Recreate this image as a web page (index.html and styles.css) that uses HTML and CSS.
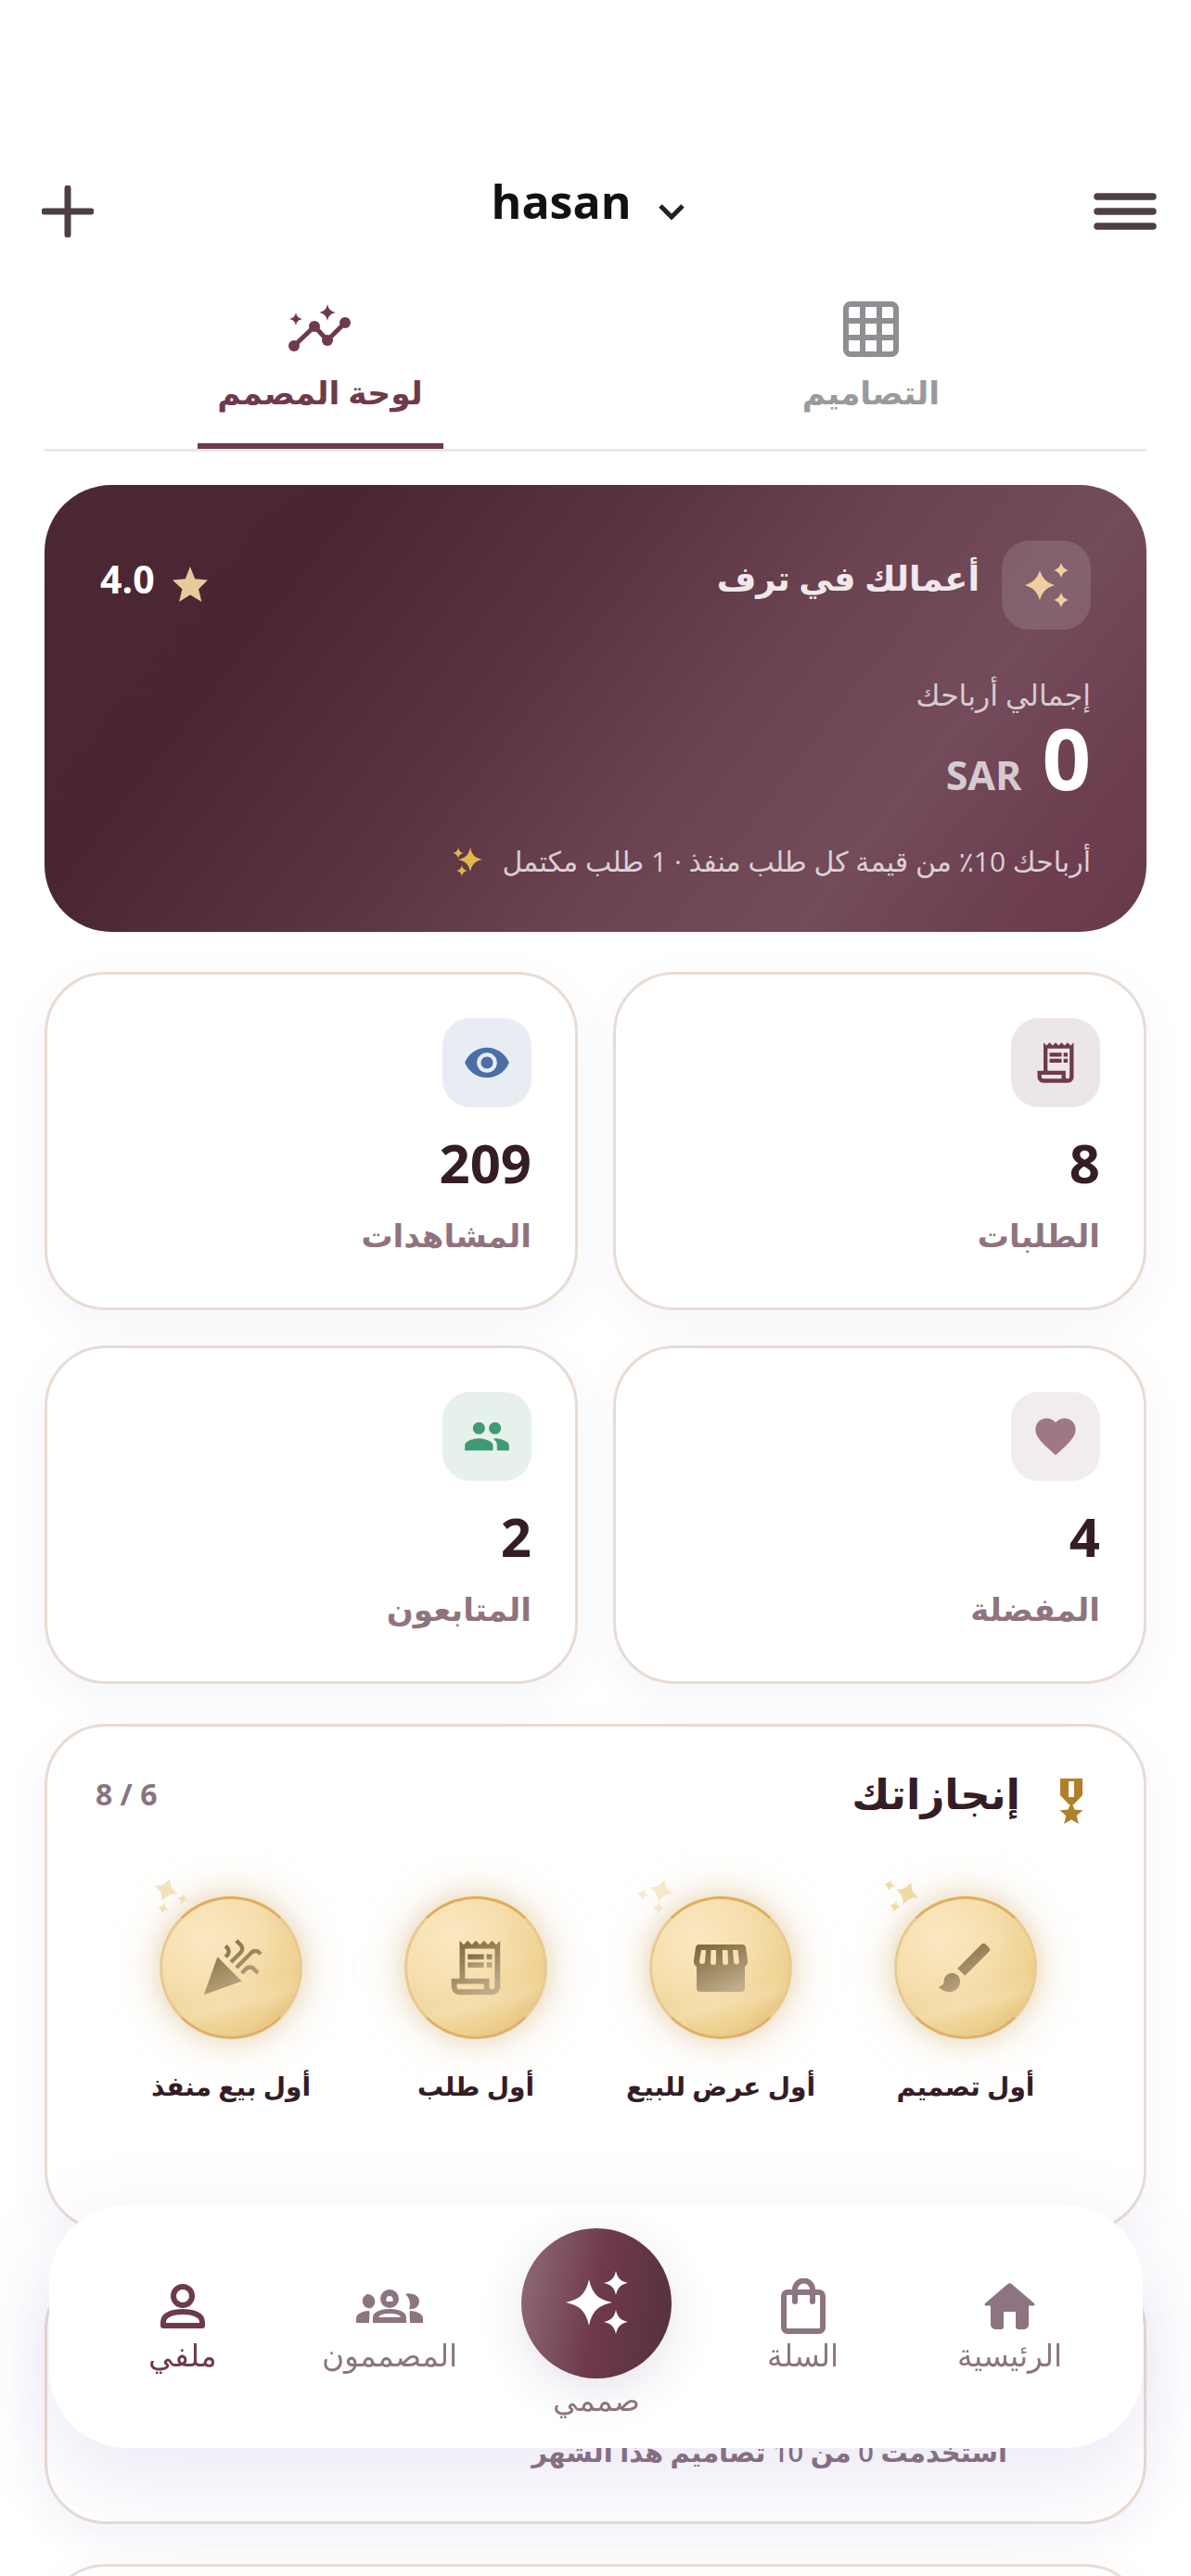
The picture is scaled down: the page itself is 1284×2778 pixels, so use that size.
FILE: index.html
```html
<!DOCTYPE html>
<html lang="ar" dir="rtl">
<head>
<meta charset="utf-8">
<title>hasan</title>
<link rel="stylesheet" href="styles.css">
</head>
<body>
<svg class="sprite" width="0" height="0" aria-hidden="true">
  <defs>
    <linearGradient id="gold" x1="0.2" y1="0" x2="0.7" y2="1">
      <stop offset="0" stop-color="#80693a"/>
      <stop offset="1" stop-color="#c2ae8e"/>
    </linearGradient>
    <path id="star4" d="M0-1C.14-.38.38-.14 1 0 .38.14.14.38 0 1-.14.38-.38.14-1 0-.38-.14-.14-.38 0-1Z"/>
    <path id="star4r" d="M0-1C.2-.42.42-.2 1 0 .42.2.2.42 0 1-.2.42-.42.2-1 0-.42-.2-.2-.42 0-1Z"/>
    <symbol id="i-receipt" viewBox="0 0 24 24">
      <path d="M19.5 3.5 18 2l-1.500 1.500L15 2l-1.500 1.500L12 2l-1.500 1.500L9 2 7.500 3.500 6 2v14H3v3c0 1.660 1.340 3 3 3h12c1.660 0 3-1.340 3-3V2l-1.500 1.500zM15 20H6c-.55 0-1-.45-1-1v-1h10v2zm4-1c0 .55-.45 1-1 1s-1-.45-1-1v-3H8V5h11v14z"/>
      <path d="M9 7h6v2H9zM16 7h2v2h-2zM9 10h6v2H9zM16 10h2v2h-2z"/>
    </symbol>
  </defs>
</svg>

<div class="app">
  <header class="topbar">
    <button class="icon-btn" aria-label="القائمة">
      <svg class="burger" viewBox="0 0 68 40"><path d="M4 4H64M4 20H64M4 36H64"/></svg>
    </button>
    <div class="account">
      <span class="account-name">hasan</span>
      <svg class="chevron" viewBox="0 0 30 18"><path d="M3 3 15 15 27 3"/></svg>
    </div>
    <button class="icon-btn" aria-label="إضافة">
      <svg class="plus" viewBox="0 0 56 56"><path d="M28 3V53M3 28H53"/></svg>
    </button>
  </header>

  <nav class="tabs">
    <div class="tab">
      <svg class="tab-icon grid-icon" viewBox="0 0 60 60"><rect x="3" y="3" width="54" height="54" rx="5"/><path d="M21 3V57M39 3V57M3 21H57M3 39H57"/></svg>
      <span class="tab-label">التصاميم</span>
    </div>
    <div class="tab tab-active">
      <svg class="tab-icon chart-icon" viewBox="0 0 72 60">
        <path class="chart-line" d="M8 48 30 27 44 42 63 23"/>
        <circle cx="8" cy="48" r="6"/><circle cx="30" cy="27" r="6"/><circle cx="44" cy="42" r="6"/><circle cx="63" cy="23" r="6"/>
        <use href="#star4" transform="translate(44 12) scale(9)"/>
        <use href="#star4" transform="translate(10 19) scale(7)"/>
      </svg>
      <span class="tab-label">لوحة المصمم</span>
    </div>
  </nav>

  <section class="hero">
    <div class="hero-top">
      <div class="hero-heading">
        <div class="hero-icon">
          <svg viewBox="0 0 96 96" class="hero-stars">
            <use href="#star4r" transform="translate(41 48) scale(16)"/>
            <use href="#star4r" transform="translate(64 32) scale(8)"/>
            <use href="#star4r" transform="translate(64 64) scale(8)"/>
          </svg>
        </div>
        <h2 class="hero-title">أعمالك في ترف</h2>
      </div>
      <div class="rating">
        <svg class="rating-star" viewBox="2 2 20 20"><path d="M12 17.270 18.180 21l-1.640-6.860L21.500 9.240l-6.910-.59L12 2 9.410 8.650 2.500 9.240l5.220 4.900L6.040 21z"/></svg>
        <span>4.0</span>
      </div>
    </div>
    <div class="hero-total-label">إجمالي أرباحك</div>
    <div class="hero-total"><span class="hero-amount">0</span><span class="hero-currency">SAR</span></div>
    <div class="hero-note">
      <span>أرباحك 10٪ من قيمة كل طلب منفذ · 1 طلب مكتمل</span>
      <svg class="note-sparkle" viewBox="0 0 32 32">
        <use href="#star4" transform="translate(19 14) scale(13)"/>
        <use href="#star4" transform="translate(6 7) scale(6)"/>
        <use href="#star4" transform="translate(10 26) scale(6)"/>
      </svg>
    </div>
  </section>

  <section class="stats">
    <article class="card stat">
      <div class="stat-icon tone-plum"><svg viewBox="0 0 24 24"><use href="#i-receipt"/></svg></div>
      <div class="stat-value">8</div>
      <div class="stat-label">الطلبات</div>
    </article>
    <article class="card stat">
      <div class="stat-icon tone-blue"><svg viewBox="0 0 24 24"><path d="M12 4.500C7 4.500 2.730 7.610 1 12c1.730 4.390 6 7.500 11 7.500s9.270-3.110 11-7.500c-1.730-4.390-6-7.500-11-7.500zM12 17c-2.760 0-5-2.240-5-5s2.240-5 5-5 5 2.240 5 5-2.240 5-5 5zm0-8c-1.660 0-3 1.340-3 3s1.340 3 3 3 3-1.340 3-3-1.340-3-3-3z"/></svg></div>
      <div class="stat-value">209</div>
      <div class="stat-label">المشاهدات</div>
    </article>
    <article class="card stat">
      <div class="stat-icon tone-rose"><svg viewBox="0 0 24 24"><path d="M12 21.350l-1.450-1.320C5.400 15.360 2 12.280 2 8.500 2 5.420 4.420 3 7.500 3c1.740 0 3.410.81 4.500 2.090C13.090 3.810 14.760 3 16.500 3 19.580 3 22 5.420 22 8.500c0 3.780-3.400 6.860-8.550 11.540L12 21.350z"/></svg></div>
      <div class="stat-value">4</div>
      <div class="stat-label">المفضلة</div>
    </article>
    <article class="card stat">
      <div class="stat-icon tone-green"><svg viewBox="0 0 24 24"><path d="M16 11c1.660 0 2.990-1.340 2.990-3S17.660 5 16 5c-1.660 0-3 1.340-3 3s1.340 3 3 3zm-8 0c1.660 0 2.990-1.340 2.990-3S9.660 5 8 5C6.340 5 5 6.340 5 8s1.340 3 3 3zm0 2c-2.330 0-7 1.170-7 3.500V19h14v-2.500c0-2.330-4.670-3.500-7-3.500zm8 0c-.29 0-.62.02-.97.05 1.160.84 1.970 1.970 1.970 3.450V19h6v-2.500c0-2.330-4.670-3.500-7-3.500z"/></svg></div>
      <div class="stat-value">2</div>
      <div class="stat-label">المتابعون</div>
    </article>
  </section>

  <section class="card achievements">
    <div class="ach-head">
      <div class="ach-title">
        <svg class="medal" viewBox="0 0 26 50">
          <path fill-rule="evenodd" d="M1 0H25V18L15.500 28H10.500L1 18ZM10 3V20H16V3Z"/>
          <path d="M13 25 16.500 33.500 25.500 34.200 18.700 40 20.800 49 13 44.200 5.200 49 7.300 40 .5 34.200 9.500 33.500Z"/>
        </svg>
        <h2>إنجازاتك</h2>
      </div>
      <div class="ach-count" dir="rtl">6 / 8</div>
    </div>
    <div class="badges">
      <div class="badge-item">
        <div class="badge">
          <svg class="sparkles" viewBox="0 0 60 60">
            <use href="#star4r" transform="translate(44 27) rotate(20) scale(13)"/>
            <use href="#star4r" transform="translate(25 18) rotate(15) scale(6)"/>
            <use href="#star4r" transform="translate(31 41) rotate(15) scale(6)"/>
          </svg>
          <svg class="badge-icon" viewBox="0 0 24 24"><path d="M7 14c-1.660 0-3 1.340-3 3 0 1.310-1.160 2-2 2 .92 1.220 2.490 2 4 2 2.210 0 4-1.790 4-4 0-1.660-1.340-3-3-3zm13.710-9.370l-1.340-1.340c-.39-.39-1.020-.39-1.410 0L9 12.250 11.750 15l8.960-8.960c.39-.39.39-1.020 0-1.410z"/></svg>
        </div>
        <div class="badge-label">أول تصميم</div>
      </div>
      <div class="badge-item">
        <div class="badge">
          <svg class="sparkles sparkles-soft" viewBox="0 0 60 60">
            <use href="#star4r" transform="translate(43 24) rotate(15) scale(13)"/>
            <use href="#star4r" transform="translate(23 28) rotate(10) scale(6)"/>
            <use href="#star4r" transform="translate(40 43) rotate(10) scale(6)"/>
          </svg>
          <svg class="badge-icon store" viewBox="0 0 58 51"><path fill-rule="evenodd" d="M6 0H52a4 4 0 0 1 4 3L58 17a7 7 0 0 1-3 7V47a4 4 0 0 1-4 4H7a4 4 0 0 1-4-4V24a7 7 0 0 1-3-7L2 3A4 4 0 0 1 6 0ZM8 6 6 18a3 3 0 0 0 6 0L13 6ZM18.500 6 18 19a3 3 0 0 0 6 0V6ZM31 6V19a3 3 0 0 0 6 0L36.500 6ZM42 6 43 18a3 3 0 0 0 6 1L47.500 6Z"/></svg>
        </div>
        <div class="badge-label">أول عرض للبيع</div>
      </div>
      <div class="badge-item">
        <div class="badge">
          <svg class="badge-icon" viewBox="0 0 24 24"><use href="#i-receipt"/></svg>
        </div>
        <div class="badge-label">أول طلب</div>
      </div>
      <div class="badge-item">
        <div class="badge">
          <svg class="sparkles sparkles-mid" viewBox="0 0 60 60">
            <use href="#star4r" transform="translate(37 23) rotate(20) scale(13)"/>
            <use href="#star4r" transform="translate(55 33) rotate(15) scale(6)"/>
            <use href="#star4r" transform="translate(34 43) rotate(15) scale(6)"/>
          </svg>
          <svg class="badge-icon" viewBox="0 0 24 24"><path d="M2 22l14-5-9-9zM14.530 12.530l5.590-5.590c.49-.49 1.280-.49 1.770 0l.59.59 1.060-1.060-.59-.59c-1.070-1.070-2.820-1.070-3.890 0l-5.590 5.590 1.060 1.060zM10.060 6.880l-.59.59 1.060 1.060.59-.59c1.070-1.070 1.070-2.820 0-3.890l-.59-.59-1.060 1.060.59.59c.48.48.48 1.280 0 1.770zM17.060 11.880l-1.590 1.590 1.060 1.060 1.590-1.590c.49-.49 1.280-.49 1.770 0l1.610 1.610 1.060-1.060-1.610-1.610c-1.080-1.070-2.820-1.070-3.890 0zM15.060 5.880l-3.590 3.590 1.060 1.060 3.590-3.590c1.070-1.070 1.070-2.820 0-3.890l-1.590-1.590-1.060 1.060 1.590 1.590c.48.49.48 1.290 0 1.770z"/></svg>
        </div>
        <div class="badge-label">أول بيع منفذ</div>
      </div>
    </div>
  </section>

  <section class="card plan">
    <p class="plan-text">استخدمت 0 من 10 تصاميم هذا الشهر</p>
  </section>

  <section class="card next-card"></section>
</div>

<nav class="bottom-nav">
  <a class="nav-item">
    <span class="nav-icon"><svg class="ni-home" viewBox="0 0 55 50"><path d="M25.500 1Q27.500-.5 29.500 1L54 22Q55.500 24 53 24.500H48V45a5 5 0 0 1-5 5H37a3 3 0 0 1-3-3V31H21V47a3 3 0 0 1-3 3H12a5 5 0 0 1-5-5V24.500H2Q-.5 24 1 22Z"/></svg></span>
    <span class="nav-label">الرئيسية</span>
  </a>
  <a class="nav-item">
    <span class="nav-icon"><svg class="ni-bag" viewBox="0 0 48 60"><rect x="3" y="15" width="42" height="42" rx="4"/><path d="M15 25V12a9.500 9.500 0 0 1 19 0V25"/></svg></span>
    <span class="nav-label">السلة</span>
  </a>
  <a class="nav-item nav-center">
    <span class="nav-fab">
      <svg viewBox="0 0 162 162"><use href="#star4" transform="translate(73 80) scale(25)"/><use href="#star4" transform="translate(102 59) scale(13)"/><use href="#star4" transform="translate(102 101) scale(13)"/></svg>
    </span>
    <span class="nav-label">صممي</span>
  </a>
  <a class="nav-item">
    <span class="nav-icon"><svg class="ni-group" viewBox="0 0 72 36"><path fill-rule="evenodd" d="M36 0a10 10 0 0 1 10 10 10 10 0 0 1-20 0A10 10 0 0 1 36 0ZM36 7a3.500 3.500 0 0 0-3.500 3.500V13h7V10.500A3.500 3.500 0 0 0 36 7ZM18 36V30C18 24 27 21 36 21S54 24 54 30V36ZM24 30H48C47 27 42 26 36 26S25 27 24 30ZM12 5a8 8 0 0 1 3 15.500 8 8 0 0 1-3-15.500ZM0 36V31C0 26 8 23 14 23 15 25 14 29 14 36ZM53 5a8 8 0 0 1 7 0 8 8 0 0 1 0 16 8 8 0 0 1-3 0C59 16 58 9 53 5ZM58 23C64 23 72 26 72 31V36H58C58 29 57 25 58 23Z"/></svg></span>
    <span class="nav-label">المصممون</span>
  </a>
  <a class="nav-item nav-active">
    <span class="nav-icon"><svg class="ni-person" viewBox="0 0 48 48"><circle cx="24" cy="13" r="10"/><path d="M3 45V41C3 33 14 30 24 30S45 33 45 41V45Z"/></svg></span>
    <span class="nav-label">ملفي</span>
  </a>
</nav>
</body>
</html>
```
FILE: styles.css
```css
* { box-sizing: border-box; }
html, body { margin: 0; padding: 0; height: 2778px; overflow: hidden; background: #fff; }
body { font-family: "Open Sans", "Noto Sans", "DejaVu Sans", sans-serif; color: #341d27; }
.sprite { position: absolute; }
h2, p { margin: 0; }

.app { padding: 190px 48px 0; height: 2778px; overflow: hidden; }

/* Header */
.topbar { display: flex; align-items: center; justify-content: space-between; height: 76px; }
.icon-btn { border: 0; background: none; padding: 0; display: flex; }
.burger { width: 68px; height: 40px; fill: none; stroke: #4f3f45; stroke-width: 7.5; stroke-linecap: round; transform: translateX(11px); }
.plus { width: 56px; height: 56px; fill: none; stroke: #4f3f45; stroke-width: 7; stroke-linecap: round; transform: translateX(-3px); }
.account { display: flex; align-items: center; gap: 28px; direction: ltr; margin-top: -22px; margin-left: -4px; }
.account-name { font-size: 50px; font-weight: 700; line-height: 60px; color: #111; }
.chevron { width: 30px; height: 18px; fill: none; stroke: #222; stroke-width: 5; margin-top: 22px; }

/* Tabs */
.tabs { display: grid; grid-template-columns: 1fr 1fr; height: 221px; border-bottom: 3px solid #e8e8e8; }
.tab { display: flex; flex-direction: column; align-items: center; padding-top: 59px; color: #9a9a9e; position: relative; }
.tab-icon { height: 60px; display: block; }
.grid-icon { width: 60px; fill: none; stroke: #8e8e93; stroke-width: 6; }
.chart-icon { width: 72px; fill: #6e3a4c; }
.chart-line { fill: none; stroke: #6e3a4c; stroke-width: 5; }
.tab-label { font-size: 34.5px; font-weight: 700; line-height: 44px; margin-top: 16px; }
.tab-active { color: #6e3a4c; }
.tab-active::after { content: ""; position: absolute; bottom: 0; left: 165px; width: 265px; height: 6px; background: #6e3a4c; }

/* Hero */
.hero { margin-top: 36px; height: 482px; border-radius: 72px; padding: 60px 60px 0 60px; color: #fff;
  background: linear-gradient(128deg, #4c2835 0%, #4a2632 22%, #5a3340 42%, #6b4351 60%, #734b5a 76%, #6c3e4f 90%, #693a4c 100%); }
.hero-top { display: flex; justify-content: space-between; align-items: flex-start; }
.hero-heading { display: flex; align-items: flex-start; gap: 24px; }
.hero-icon { width: 96px; height: 96px; border-radius: 30px; background: rgba(255,255,255,.13); }
.hero-stars { width: 96px; height: 96px; display: block; fill: #efcf9f; }
.hero-title { font-size: 36.7px; font-weight: 700; line-height: 50px; margin-top: 15px; color: #f0e8eb; }
.rating { display: flex; align-items: center; gap: 18px; margin-top: 14px; font-size: 41px; font-weight: 700; line-height: 50px; }
.rating-star { width: 40px; height: 40px; fill: #e8c99b; margin-top: 14px; }
.hero-total-label { margin-top: 48px; font-size: 31.5px; line-height: 44px; color: rgba(255,255,255,.72); }
.hero-total { display: flex; align-items: baseline; gap: 22px; margin-top: -2px; }
.hero-amount { font-size: 92px; font-weight: 700; line-height: 96px; }
.hero-currency { font-size: 43px; font-weight: 700; color: rgba(255,255,255,.72); }
.hero-note { display: flex; align-items: center; gap: 21px; margin-top: 42px; font-size: 30px; line-height: 44px; color: rgba(255,255,255,.76); }
.note-sparkle { width: 32px; height: 32px; fill: #e0b84b; }

/* Stat cards */
.card { background: #fff; border: 3px solid #e8dcd3; border-radius: 66px; box-shadow: 0 14px 48px rgba(90,80,170,.06); }
.stats { display: grid; grid-template-columns: 1fr 1fr; gap: 38px; margin-top: 43px; }
.stat { height: 365px; padding: 47px 47px 0; }
.stat-icon { width: 96px; height: 96px; border-radius: 30px; display: flex; align-items: center; justify-content: center; }
.stat-icon svg { width: 52px; height: 52px; fill: currentColor; }
.tone-plum { background: #ede6e9; color: #6e3a4c; }
.tone-blue { background: #e8ecf3; color: #4a6fa5; }
.tone-rose { background: #f1ecee; color: #a07883; }
.tone-green { background: #e7f1ec; color: #3f9a72; }
.stat-value { margin-top: 30px; font-size: 58px; font-weight: 700; line-height: 60px; color: #341d27; }
.stat-label { margin-top: 24px; font-size: 34px; font-weight: 600; line-height: 48px; color: #8f7480; }

/* Achievements */
.achievements { margin-top: 43px; height: 547px; }
.ach-head { display: flex; justify-content: space-between; align-items: center; padding: 38px 65px 0 52px; }
.ach-title { display: flex; align-items: center; gap: 42px; }
.medal { width: 26px; height: 50px; fill: #b17f29; margin-top: 18px; }
.ach-title h2 { font-size: 45px; font-weight: 700; line-height: 56px; color: #341d27; }
.ach-count { font-size: 32px; font-weight: 700; color: #8a7380; }
.badges { display: grid; grid-template-columns: repeat(4, 264px); margin-top: 77px; padding-right: 60px; }
.badge-item { display: flex; flex-direction: column; align-items: center; }
.badge { width: 154px; height: 154px; border-radius: 50%; position: relative; display: flex; align-items: center; justify-content: center;
  border: 3px solid;
  border-color: #dfae5b #e8c98f #dfb06a #e8c98f;
  background:
    linear-gradient(165deg, rgba(255,255,255,0) 62%, rgba(255,250,235,.16) 72%, rgba(255,255,255,0) 80%),
    radial-gradient(circle at 32% 28%, #fbe8c2 0%, #f6dfae 38%, #efd293 68%, #e0b469 100%);
  box-shadow: 0 0 30px rgba(205,160,90,.4), 0 0 60px rgba(215,175,110,.22); }
.badge-icon { width: 70px; height: 70px; fill: url(#gold); }
.store { width: 58px; height: 51px; }
.sparkles { position: absolute; left: -33px; top: -33px; width: 60px; height: 60px; fill: #f1d9a6; }
.sparkles-soft { opacity: .55; }
.sparkles-mid { opacity: .75; }
.badge-label { margin-top: 30px; font-size: 28px; font-weight: 700; line-height: 40px; color: #341d27; white-space: nowrap; }

/* Plan */
.plan { margin-top: 40px; height: 276px; padding: 175px 147px 0 0; }
.plan-text { font-size: 29px; font-weight: 600; line-height: 40px; color: #8a7380; }
.next-card { margin-top: 43px; height: 300px; }

/* Bottom nav */
.bottom-nav { position: fixed; left: 53px; right: 52px; bottom: 138px; height: 262px; border-radius: 84px; background: #fff; display: grid; grid-template-columns: repeat(5, 223px); justify-content: center; padding-top: 79px;
  box-shadow: 0 30px 100px rgba(90,70,170,.13); }
.nav-item { display: flex; flex-direction: column; align-items: center; color: #8c7480; }
.nav-icon { height: 60px; display: flex; align-items: center; justify-content: center; }
.nav-label { font-size: 33px; font-weight: 300; line-height: 40px; margin-top: 3px; white-space: nowrap; }
.nav-active { color: #6e3a4c; }
.ni-home { width: 55px; height: 50px; fill: currentColor; }
.ni-bag { width: 48px; height: 60px; fill: none; stroke: currentColor; stroke-width: 6; stroke-linecap: round; }
.ni-group { width: 72px; height: 36px; fill: currentColor; }
.ni-person { width: 48px; height: 48px; fill: none; stroke: currentColor; stroke-width: 6; stroke-linejoin: round; }
.nav-center { margin-top: -54px; }
.nav-fab { width: 162px; height: 162px; border-radius: 50%; background: linear-gradient(100deg, #916d7a 0%, #6e3a4c 50%, #54303d 100%); box-shadow: 0 14px 50px rgba(90,60,110,.14); }
.nav-fab svg { width: 162px; height: 162px; display: block; fill: #fff; }
```
